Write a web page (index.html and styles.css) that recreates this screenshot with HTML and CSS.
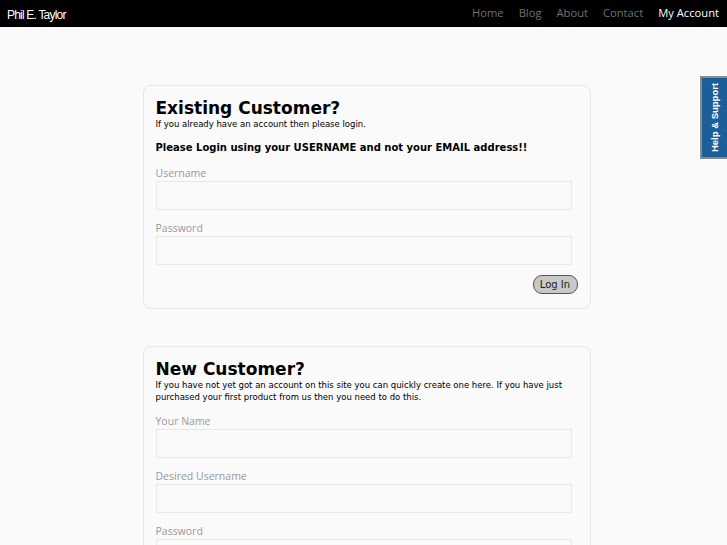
FILE: index.html
```html
<!DOCTYPE html>
<html>
<head>
<meta charset="utf-8">
<link rel="stylesheet" href="styles.css">
</head>
<body>
<header class="topbar">
  <a class="logo" href="#">Phil E. Taylor</a>
  <nav class="nav">
    <a href="#">Home</a>
    <a href="#">Blog</a>
    <a href="#">About</a>
    <a href="#">Contact</a>
    <a href="#" class="active">My Account</a>
  </nav>
</header>

<a class="help-tab" href="#"><span>Help &amp; Support</span></a>

<main class="main">
  <section class="card">
    <h1>Existing Customer?</h1>
    <p class="sub">If you already have an account then please login.</p>
    <p class="notice">Please Login using your USERNAME and not your EMAIL address!!</p>
    <label class="lbl first">Username</label>
    <input class="field" type="text">
    <label class="lbl">Password</label>
    <input class="field" type="password">
    <div class="actions"><button class="btn">Log In</button></div>
  </section>

  <section class="card">
    <h1>New Customer?</h1>
    <p class="sub">If you have not yet got an account on this site you can quickly create one here. If you have just purchased your first product from us then you need to do this.</p>
    <label class="lbl first">Your Name</label>
    <input class="field" type="text">
    <label class="lbl">Desired Username</label>
    <input class="field" type="text">
    <label class="lbl">Password</label>
    <input class="field" type="password">
  </section>
</main>
</body>
</html>
```

FILE: styles.css
```css
* { box-sizing: border-box; }
html, body { margin: 0; padding: 0; }
body {
  background: #fafafa;
  font-family: "DejaVu Sans", sans-serif;
  color: #000;
}
.topbar {
  height: 27px;
  background: #000;
  display: flex;
  align-items: center;
  justify-content: space-between;
  padding: 0 8px 0 7px;
}
.logo {
  color: #fff;
  text-decoration: none;
  font-family: "Liberation Sans", sans-serif;
  font-size: 12px;
  letter-spacing: -0.8px;
  padding-top: 2px;
}
.nav { display: flex; gap: 15px; padding-bottom: 3px; }
.nav a {
  color: #707070;
  text-decoration: none;
  font-family: "Open Sans", sans-serif;
  font-size: 11.2px;
}
.nav a.active { color: #fff; }

.help-tab {
  position: fixed;
  right: 0;
  top: 76px;
  width: 27px;
  height: 83px;
  background: #1b5e9a;
  border: 2px solid #8a8a8a;
  border-right: none;
  display: flex;
  align-items: center;
  justify-content: center;
  text-decoration: none;
}
.help-tab span {
  transform: rotate(-90deg);
  white-space: nowrap;
  color: #fff;
  font-family: "Liberation Sans", sans-serif;
  font-weight: bold;
  font-size: 9.5px;
}

.main {
  width: 454px;
  margin: 58px auto 0;
  padding-left: 6px;
  display: flex;
  flex-direction: column;
  gap: 37px;
}
.card {
  background: #fafafa;
  border: 1px solid #e6e6e6;
  border-radius: 8px;
  padding: 13px 12px 14px 12px;
}
.card h1 {
  margin: 0;
  font-size: 17px;
  font-weight: bold;
  line-height: 19px;
}
.sub {
  margin: 0;
  font-size: 8.5px;
  line-height: 12px;
}
.notice {
  margin: 11px 0 0;
  font-size: 10px;
  font-weight: bold;
  line-height: 14px;
}
.lbl {
  display: block;
  margin-top: 11px;
  font-family: "Open Sans", sans-serif;
  font-size: 10.5px;
  color: #999;
  line-height: 14px;
}
.field {
  display: block;
  width: 416px;
  height: 29px;
  margin-top: 1px;
  background: #fafafa;
  border: 1px solid #e8e8e8;
  border-radius: 0;
}
.actions {
  display: flex;
  justify-content: flex-end;
  margin-top: 10px;
}
.btn {
  font-family: "DejaVu Sans", sans-serif;
  font-size: 10px;
  color: #222;
  background: #c8c8c8;
  border: 1px solid #555;
  border-radius: 9px;
  height: 19px;
  width: 45px;
  padding: 0;
  line-height: 16px;
}
```
